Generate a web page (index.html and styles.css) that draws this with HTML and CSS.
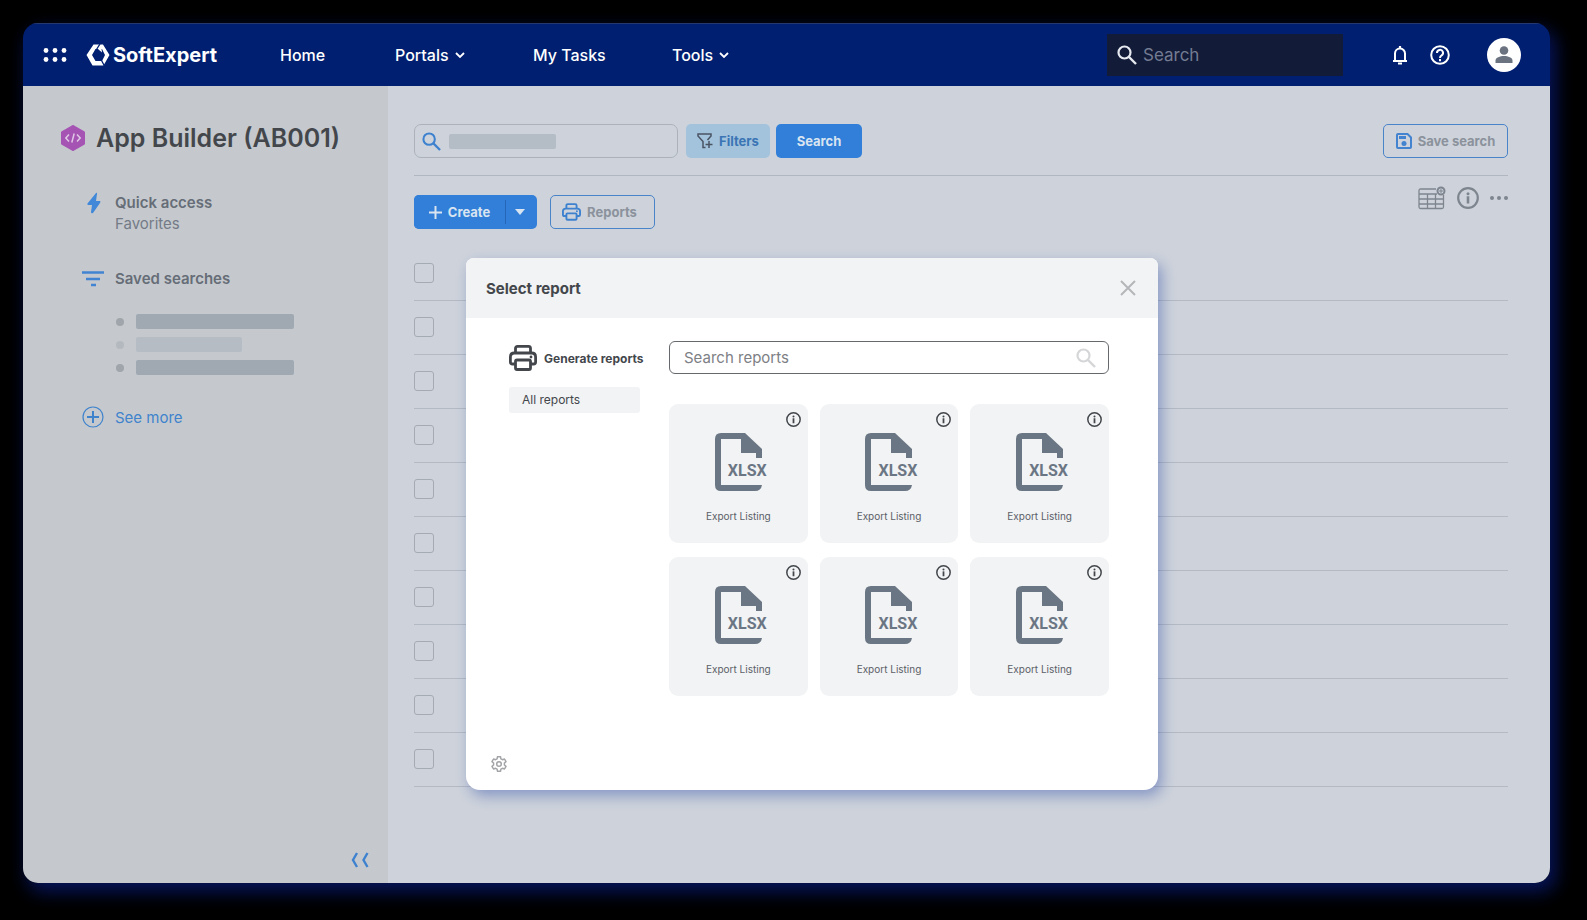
FILE: index.html
```html
<!DOCTYPE html>
<html lang="en">
<head>
    <meta charset="UTF-8">
    <title>App Builder (AB001)</title>
    <link rel="stylesheet" href="styles.css">
</head>
<body>

<!-- shared icons -->
<svg class="sprite" aria-hidden="true">
    <symbol id="i-search" viewBox="0 0 20 20">
        <circle cx="7.5" cy="7.5" r="6" fill="none" stroke="currentColor" stroke-width="2.2"/>
        <path d="M12 12l7 7" fill="none" stroke="currentColor" stroke-width="2.4"/>
    </symbol>
    <symbol id="i-chevron" viewBox="0 0 10 8">
        <path d="M1 2l4 4 4-4" fill="none" stroke="currentColor" stroke-width="1.8"/>
    </symbol>
    <symbol id="i-print" viewBox="0 0 28 26">
        <g fill="none" stroke="currentColor" stroke-width="2.8" stroke-linejoin="round">
            <path d="M6.5 8V3.4q0-2 2-2h11q2 0 2 2V8"/>
            <path d="M6.5 19H3.4q-2 0-2-2v-5q0-4 4-4h17.2q4 0 4 4v5q0 2-2 2h-3.1"/>
            <rect x="6.5" y="15" width="15" height="9.5" rx="1.5"/>
        </g>
        <circle cx="22" cy="12" r="1.4" fill="currentColor"/>
    </symbol>
    <symbol id="i-info" viewBox="0 0 22 22">
        <circle cx="11" cy="11" r="9.8" fill="none" stroke="currentColor" stroke-width="2.2"/>
        <circle cx="11" cy="6.7" r="1.5" fill="currentColor"/>
        <path d="M11 9.300V16.500" fill="none" stroke="currentColor" stroke-width="2.6"/>
    </symbol>
    <symbol id="i-file" viewBox="0 0 47 58">
        <path d="M6 0H30L47 16V25H41V20H26V6H6V52H47Q46 58 40 58H6Q0 58 0 52V6Q0 0 6 0Z" fill="currentColor"/>
    </symbol>
</svg>

<div class="window">
    <header class="topbar">
        <button class="icon-btn apps" aria-label="Apps">
            <svg width="24" height="14" viewBox="0 0 24 14" fill="#fff">
                <circle cx="3" cy="2.5" r="2.4"/><circle cx="12" cy="2.5" r="2.4"/><circle cx="21" cy="2.5" r="2.4"/>
                <circle cx="3" cy="11.5" r="2.4"/><circle cx="12" cy="11.5" r="2.4"/><circle cx="21" cy="11.5" r="2.4"/>
            </svg>
        </button>
        <a href="#" class="brand">
            <svg width="24" height="22" viewBox="0 0 24 22">
                <path d="M7.500 0.500H17L23.500 11 17.500 21.500H6.500L0.500 11ZM9.500 5L6 11l3.500 6h6.500l3-6-3-6Z" fill="#fff" fill-rule="evenodd"/>
                <path d="M14 0L9.500 7M15 15.500L18.500 22" stroke="#001f71" stroke-width="1.300"/>
                <path d="M12 5l4 3.500-.5-4Z" fill="#fff"/>
            </svg>
            <span>SoftExpert</span>
        </a>
        <nav class="nav">
            <a href="#" class="nav-home">Home</a>
            <a href="#" class="nav-portals">Portals <svg width="10" height="8"><use href="#i-chevron"/></svg></a>
            <a href="#" class="nav-tasks">My Tasks</a>
            <a href="#" class="nav-tools">Tools <svg width="10" height="8"><use href="#i-chevron"/></svg></a>
        </nav>
        <label class="top-search">
            <svg width="20" height="20"><use href="#i-search"/></svg>
            <input type="text" placeholder="Search" aria-label="Search">
        </label>
        <div class="top-actions">
            <button class="icon-btn" aria-label="Notifications">
                <svg width="16" height="20" viewBox="0 0 16 20">
                    <path d="M1 16h14M3 16V8.500a5 5 0 0 1 10 0V16" fill="none" stroke="#fff" stroke-width="2"/>
                    <path d="M8 1v2.500M6 18.500h4" stroke="#fff" stroke-width="2.2"/>
                </svg>
            </button>
            <button class="icon-btn" aria-label="Help">
                <svg width="20" height="20" viewBox="0 0 20 20" fill="none" stroke="#fff" stroke-width="2">
                    <circle cx="10" cy="10" r="8.8"/>
                    <path d="M7 8a3 3 0 1 1 4.6 2.4Q10 11.3 10 13"/>
                    <path d="M10 14v2.2"/>
                </svg>
            </button>
            <button class="icon-btn avatar" aria-label="Profile">
                <svg width="18" height="18" viewBox="0 0 18 18" fill="#6b7280">
                    <circle cx="9" cy="4.5" r="4.3"/>
                    <path d="M0.5 17v-2.5C0.5 11.5 5 10 9 10s8.500 1.500 8.500 4.500V17Z"/>
                </svg>
            </button>
        </div>
    </header>

    <div class="layout">
        <aside class="sidebar">
            <h1>
                <svg width="24" height="26" viewBox="0 0 24 26">
                    <path d="M12 1.5L22.5 7.5V18.5L12 24.5 1.5 18.5V7.5Z" fill="#a554b3" stroke="#a554b3" stroke-width="3" stroke-linejoin="round"/>
                    <path d="M8 9.5L4.8 13 8 16.5M16 9.5l3.2 3.5-3.2 3.5M13.200 8.500l-2.400 9" fill="none" stroke="#dfc8e6" stroke-width="1.5"/>
                </svg>
                App Builder (AB001)
            </h1>
            <div class="side-item">
                <svg width="16" height="22" viewBox="0 0 16 22"><path d="M11 1Q12.500 0 12 2L11 9H15Q16 9.500 15 11L8 21Q6 22 6 20L7 13H3Q2 12.500 2.500 11.500Z" fill="#4188d8"/></svg>
                <div>
                    <strong>Quick access</strong>
                    <a href="#">Favorites</a>
                </div>
            </div>
            <div class="side-item saved">
                <svg width="22" height="16" viewBox="0 0 22 16"><path d="M0 1.500h22M4 8h14M9 14h5" stroke="#4384d2" stroke-width="2.6"/></svg>
                <strong>Saved searches</strong>
            </div>
            <ul class="saved-list">
                <li><span class="bar"></span></li>
                <li class="light"><span class="bar"></span></li>
                <li><span class="bar"></span></li>
            </ul>
            <a href="#" class="side-item more">
                <svg width="22" height="22" viewBox="0 0 22 22" fill="none" stroke="currentColor"><circle cx="11" cy="11" r="10" stroke-width="1.2"/><path d="M11 5v12M5 11h12" stroke-width="2"/></svg>
                See more
            </a>
            <button class="icon-btn collapse" aria-label="Collapse menu">
                <svg width="18" height="16" viewBox="0 0 18 16"><path d="M6 1L2 8l4 7M16.500 1l-4 7 4 7" fill="none" stroke="#3e82cf" stroke-width="2.4"/></svg>
            </button>
        </aside>

        <main class="main">
            <div class="searchbar">
                <label class="main-search">
                    <svg width="19" height="19"><use href="#i-search"/></svg>
                    <span class="bar"></span>
                    <input type="text" aria-label="Search records">
                </label>
                <button class="btn btn-filter">
                    <svg width="16" height="16" viewBox="0 0 16 16" fill="none" stroke="#4a5464" stroke-width="1.5"><path d="M8.500 14.500H6V8.500L1 3V1h13v2l-3.500 4M12 8v7M8.500 11.500h7"/></svg>
                    Filters
                </button>
                <button class="btn btn-blue">Search</button>
                <button class="btn btn-outline btn-save">
                    <svg width="16" height="16" viewBox="0 0 16 16"><path d="M2 1h9.500L15 4.500V14q0 1-1 1H2q-1 0-1-1V2q0-1 1-1Z" fill="none" stroke="#4383d0" stroke-width="2"/><path d="M3 3h7v3H3Z" fill="#4383d0"/><circle cx="8" cy="10.500" r="2.500" fill="#4383d0"/></svg>
                    Save search
                </button>
            </div>

            <div class="toolbar">
                <div class="split">
                    <button class="btn btn-blue">
                        <svg width="13" height="13" viewBox="0 0 13 13"><path d="M6.500 0v13M0 6.500h13" stroke="currentColor" stroke-width="2"/></svg>
                        Create
                    </button>
                    <button class="btn btn-blue btn-drop" aria-label="More create options">
                        <svg width="10" height="6" viewBox="0 0 10 6"><path d="M0 0h10L5 6Z" fill="currentColor"/></svg>
                    </button>
                </div>
                <button class="btn btn-outline btn-reports">
                    <svg width="19" height="18"><use href="#i-print"/></svg>
                    Reports
                </button>
                <div class="view-actions">
                    <button class="icon-btn" aria-label="Columns">
                        <svg width="28" height="24" viewBox="0 0 28 24" fill="none" stroke="currentColor">
                            <path d="M18 3H2.500Q1 3 1 4.500V21q0 1.500 1.500 1.500H24q1.500 0 1.500-1.500V9M1 8h18M1 13h24.500M1 18h24.500M9.500 8v14.500M17.500 8v14.500" stroke-width="1.3"/>
                            <circle cx="23" cy="5" r="3.500" stroke-width="2"/>
                            <path d="M23 3v4M21 5h4" stroke-width="1"/>
                        </svg>
                    </button>
                    <button class="icon-btn" aria-label="Information"><svg width="22" height="22"><use href="#i-info"/></svg></button>
                    <button class="icon-btn" aria-label="More">
                        <svg width="18" height="4" viewBox="0 0 18 4" fill="currentColor"><circle cx="2" cy="2" r="2"/><circle cx="9" cy="2" r="2"/><circle cx="16" cy="2" r="2"/></svg>
                    </button>
                </div>
            </div>

            <table class="records">
                <tr><td><input type="checkbox" aria-label="Select all"></td></tr>
                <tr><td><input type="checkbox" aria-label="Select row 1"></td></tr>
                <tr><td><input type="checkbox" aria-label="Select row 2"></td></tr>
                <tr><td><input type="checkbox" aria-label="Select row 3"></td></tr>
                <tr><td><input type="checkbox" aria-label="Select row 4"></td></tr>
                <tr><td><input type="checkbox" aria-label="Select row 5"></td></tr>
                <tr><td><input type="checkbox" aria-label="Select row 6"></td></tr>
                <tr><td><input type="checkbox" aria-label="Select row 7"></td></tr>
                <tr><td><input type="checkbox" aria-label="Select row 8"></td></tr>
                <tr><td><input type="checkbox" aria-label="Select row 9"></td></tr>
            </table>

            <div class="modal" role="dialog" aria-labelledby="modalTitle">
                <div class="modal-header">
                    <h2 id="modalTitle">Select report</h2>
                    <button class="icon-btn" aria-label="Close">
                        <svg width="16" height="16" viewBox="0 0 16 16"><path d="M1 1l14 14M15 1L1 15" stroke="#b4b6b9" stroke-width="2"/></svg>
                    </button>
                </div>
                <div class="modal-body">
                    <div class="modal-side">
                        <h3><svg width="28" height="26"><use href="#i-print"/></svg>Generate reports</h3>
                        <a href="#" class="tab">All reports</a>
                    </div>
                    <div class="modal-content">
                        <label class="report-search">
                            <input type="text" placeholder="Search reports" aria-label="Search reports">
                            <svg width="20" height="20"><use href="#i-search"/></svg>
                        </label>
                        <div class="cards">
                            <div class="card">
                                <button class="icon-btn card-info" aria-label="Report details"><svg width="15" height="15"><use href="#i-info"/></svg></button>
                                <div class="file"><svg width="47" height="58"><use href="#i-file"/></svg><b>XLSX</b></div>
                                <span>Export Listing</span>
                            </div>
                            <div class="card">
                                <button class="icon-btn card-info" aria-label="Report details"><svg width="15" height="15"><use href="#i-info"/></svg></button>
                                <div class="file"><svg width="47" height="58"><use href="#i-file"/></svg><b>XLSX</b></div>
                                <span>Export Listing</span>
                            </div>
                            <div class="card">
                                <button class="icon-btn card-info" aria-label="Report details"><svg width="15" height="15"><use href="#i-info"/></svg></button>
                                <div class="file"><svg width="47" height="58"><use href="#i-file"/></svg><b>XLSX</b></div>
                                <span>Export Listing</span>
                            </div>
                            <div class="card">
                                <button class="icon-btn card-info" aria-label="Report details"><svg width="15" height="15"><use href="#i-info"/></svg></button>
                                <div class="file"><svg width="47" height="58"><use href="#i-file"/></svg><b>XLSX</b></div>
                                <span>Export Listing</span>
                            </div>
                            <div class="card">
                                <button class="icon-btn card-info" aria-label="Report details"><svg width="15" height="15"><use href="#i-info"/></svg></button>
                                <div class="file"><svg width="47" height="58"><use href="#i-file"/></svg><b>XLSX</b></div>
                                <span>Export Listing</span>
                            </div>
                            <div class="card">
                                <button class="icon-btn card-info" aria-label="Report details"><svg width="15" height="15"><use href="#i-info"/></svg></button>
                                <div class="file"><svg width="47" height="58"><use href="#i-file"/></svg><b>XLSX</b></div>
                                <span>Export Listing</span>
                            </div>
                        </div>
                    </div>
                </div>
                <div class="modal-footer">
                    <button class="icon-btn" aria-label="Settings">
                        <svg width="16" height="16" viewBox="0 0 16 16" fill="none" stroke="#a3a5a8" stroke-width="1.5" stroke-linejoin="round">
                            <path d="M6.5 0.7h3l.4 2.100 1.600.9 2-.7 1.500 2.600L13.400 7v2l1.600 1.400-1.500 2.600-2-.7-1.600.9-.4 2.100h-3l-.4-2.100-1.600-.9-2 .7L1 10.400 2.600 9V7L1 5.600 2.500 3l2 .7 1.600-.9Z"/>
                            <circle cx="8" cy="8" r="2.3"/>
                        </svg>
                    </button>
                </div>
            </div>
        </main>
    </div>
</div>

</body>
</html>
```
FILE: styles.css
```css
* {
    box-sizing: border-box;
}

body {
    margin: 0;
    padding: 23px 37px 37px 23px;
    min-height: 100vh;
    background-color: #000;
    color: #43474c;
    font-family: 'Inter', sans-serif;
    font-size: 16px;
}

svg {
    display: block;
    flex: none;
}

a {
    color: inherit;
    text-decoration: none;
}

input,
button {
    font-family: inherit;
}

.sprite {
    position: absolute;
    width: 0;
    height: 0;
}

.icon-btn {
    display: flex;
    align-items: center;
    justify-content: center;
    padding: 0;
    border: none;
    background: none;
    color: inherit;
    cursor: pointer;
}

.window {
    display: flex;
    flex-direction: column;
    min-height: calc(100vh - 60px);
    border-radius: 15px;
    overflow: hidden;
    box-shadow: 5px 8px 18px 1px #06145a;
}

/* top bar */
.topbar {
    display: flex;
    align-items: center;
    height: 63px;
    padding: 0 29px 0 20px;
    background-color: #001f71;
    border-top: 1px solid #26396f;
    color: #fff;
}

.brand {
    display: flex;
    align-items: center;
    gap: 3px;
    width: 194px;
    margin-left: 19px;
    font-size: 20px;
    font-weight: 700;
}

.nav {
    display: flex;
    font-size: 16px;
    font-weight: 500;
}

.nav a {
    display: flex;
    align-items: center;
    gap: 6px;
}

.nav-home {
    width: 115px;
}

.nav-portals {
    width: 138px;
}

.nav-tasks {
    width: 139px;
}

.top-search {
    display: flex;
    align-items: center;
    gap: 6px;
    width: 236px;
    height: 42px;
    margin-left: auto;
    padding: 0 10px;
    background-color: #121b38;
    color: #e6e9f0;
}

.top-search input {
    width: 100%;
    border: none;
    background: none;
    padding: 0;
    font-size: 17px;
}

.top-search input::placeholder {
    color: #747b92;
    opacity: 1;
}

.top-actions {
    display: flex;
    align-items: center;
    gap: 22px;
    margin-left: 49px;
}

.avatar {
    width: 34px;
    height: 34px;
    margin-left: 15px;
    border-radius: 50%;
    background-color: #fff;
}

/* sidebar */
.layout {
    display: flex;
    flex: 1;
}

.sidebar {
    display: flex;
    flex-direction: column;
    width: 365px;
    padding: 35px 19px 15px 38px;
    background-color: #c5c9ce;
}

h1 {
    display: flex;
    align-items: center;
    gap: 11px;
    margin: 0 0 37px;
    font-size: 25px;
    line-height: 34px;
    font-weight: 600;
    white-space: nowrap;
}

.side-item {
    display: grid;
    grid-template-columns: 24px 1fr;
    align-items: center;
    gap: 10px;
    padding-left: 20px;
    color: #747b86;
    font-size: 15px;
    line-height: 21px;
}

.side-item svg {
    justify-self: center;
}

.side-item > svg:first-child {
    align-self: start;
}

.side-item strong {
    display: block;
    color: #666d77;
    font-weight: 600;
}

.saved {
    margin-top: 34px;
}

.saved > svg:first-child {
    align-self: center;
}

.saved-list {
    display: flex;
    flex-direction: column;
    gap: 8px;
    margin: 25px 0 31px;
    padding: 0 0 0 55px;
    list-style: none;
}

.saved-list li {
    display: flex;
    align-items: center;
    gap: 12px;
}

.saved-list li::before {
    content: "";
    width: 8px;
    height: 8px;
    border-radius: 50%;
    background-color: #9fa5ab;
}

.bar {
    width: 158px;
    height: 15px;
    border-radius: 2px;
    background-color: #a0a9b1;
}

.light .bar {
    width: 106px;
    background-color: #b6bcc4;
}

.saved-list .light::before {
    background-color: #b4b9bf;
}

.more {
    color: #3f83cc;
}

.collapse {
    align-self: flex-end;
    margin-top: auto;
}

/* main area */
.main {
    position: relative;
    flex: 1;
    padding: 38px 42px 0 26px;
    background-color: #ced3db;
}

.btn {
    display: flex;
    align-items: center;
    justify-content: center;
    gap: 6px;
    height: 34px;
    padding: 0;
    border: none;
    border-radius: 5px;
    font-size: 13px;
    font-weight: 700;
    white-space: nowrap;
    cursor: pointer;
}

.btn-blue {
    width: 86px;
    background-color: #317fd8;
    color: #d9e4f1;
}

.btn-filter {
    width: 84px;
    margin: 0 6px 0 8px;
    background-color: #a2c3db;
    color: #3b75b5;
}

.btn-outline {
    border: 1px solid #4983c8;
    background-color: transparent;
    color: #8b929c;
}

.btn-save {
    width: 125px;
    margin-left: auto;
}

.btn-reports {
    width: 105px;
    margin-left: 13px;
    padding-right: 6px;
}

.btn-reports svg {
    color: #3e82cf;
}

.searchbar {
    display: flex;
    align-items: center;
    padding-bottom: 17px;
    border-bottom: 1px solid #b1b7c0;
}

.main-search {
    display: flex;
    align-items: center;
    gap: 8px;
    width: 264px;
    height: 34px;
    padding: 0 7px;
    border: 1px solid #abb2ba;
    border-radius: 7px;
    color: #3e82cf;
}

.main-search .bar {
    width: 107px;
    flex: none;
    background-color: #b4bcc5;
}

.main-search input {
    flex: 1;
    min-width: 0;
    border: none;
    background: none;
}

.toolbar {
    display: flex;
    align-items: center;
    padding-top: 19px;
}

.split {
    display: flex;
    width: 123px;
    border-radius: 5px;
    overflow: hidden;
    background-color: #317fd8;
}

.split .btn {
    flex: 1;
    border-radius: 0;
}

.split .btn-drop {
    flex: none;
    width: 32px;
    height: 24px;
    margin-top: 5px;
    padding-right: 4px;
    border-left: 1px solid #2566b8;
}

.view-actions {
    display: flex;
    align-items: center;
    gap: 11px;
    align-self: flex-start;
    height: 24px;
    margin: -9px 0 0 auto;
    color: #7e858e;
}

.records {
    width: 100%;
    margin-top: 17px;
    border-collapse: collapse;
}

.records td {
    height: 54px;
    padding: 0;
    border-bottom: 1px solid #b4bac3;
}

.records input {
    display: block;
    appearance: none;
    width: 20px;
    height: 20px;
    margin: 0;
    border: 1px solid #a5abb3;
    border-radius: 3px;
}

/* report dialog */
.modal {
    position: absolute;
    top: 172px;
    left: 78px;
    display: flex;
    flex-direction: column;
    width: 692px;
    min-height: 532px;
    border-radius: 8px 8px 14px 14px;
    overflow: hidden;
    background-color: #fff;
    box-shadow: 4px 6px 14px rgba(52, 80, 170, 0.45);
}

.modal-header {
    display: flex;
    align-items: center;
    justify-content: space-between;
    height: 60px;
    padding: 0 22px 0 20px;
    background-color: #f2f3f4;
}

.modal-header h2 {
    margin: 0;
    font-size: 15px;
    font-weight: 700;
}

.modal-body {
    display: flex;
    flex: 1;
    gap: 29px;
    padding: 23px 49px 0 43px;
}

.modal-side {
    width: 131px;
}

.modal-side h3 {
    display: flex;
    align-items: center;
    gap: 7px;
    height: 34px;
    margin: 0 0 12px;
    font-size: 12px;
    font-weight: 700;
    white-space: nowrap;
}

.tab {
    display: block;
    padding-left: 13px;
    border-radius: 3px;
    background-color: #f2f3f4;
    font-size: 12px;
    line-height: 26px;
}

.modal-content {
    flex: 1;
}

.report-search {
    display: flex;
    align-items: center;
    height: 33px;
    padding: 0 12px 0 14px;
    border: 1px solid #65686c;
    border-radius: 6px;
    color: #d5d6d8;
}

.report-search input {
    flex: 1;
    border: none;
    padding: 0;
    font-size: 15px;
}

.report-search input::placeholder {
    color: #7d8085;
    opacity: 1;
}

.cards {
    display: grid;
    grid-template-columns: repeat(3, 1fr);
    gap: 14px 12px;
    margin-top: 30px;
}

.card {
    position: relative;
    display: flex;
    flex-direction: column;
    align-items: center;
    gap: 17px;
    height: 139px;
    padding-top: 29px;
    border-radius: 9px;
    background-color: #f2f3f4;
    color: #6b7684;
}

.card span {
    color: #5b6068;
    font-size: 10px;
    line-height: 16px;
}

.card-info {
    position: absolute;
    top: 8px;
    right: 7px;
    color: #43474c;
}

/* the label overhangs the sheet on the right */
.file {
    position: relative;
}

.file b {
    position: absolute;
    top: 28px;
    left: 13px;
    font-family: 'Roboto', sans-serif;
    font-size: 16px;
    line-height: 20px;
}

.modal-footer {
    padding: 0 25px 18px;
}

.modal-footer .icon-btn {
    width: 16px;
}
```
